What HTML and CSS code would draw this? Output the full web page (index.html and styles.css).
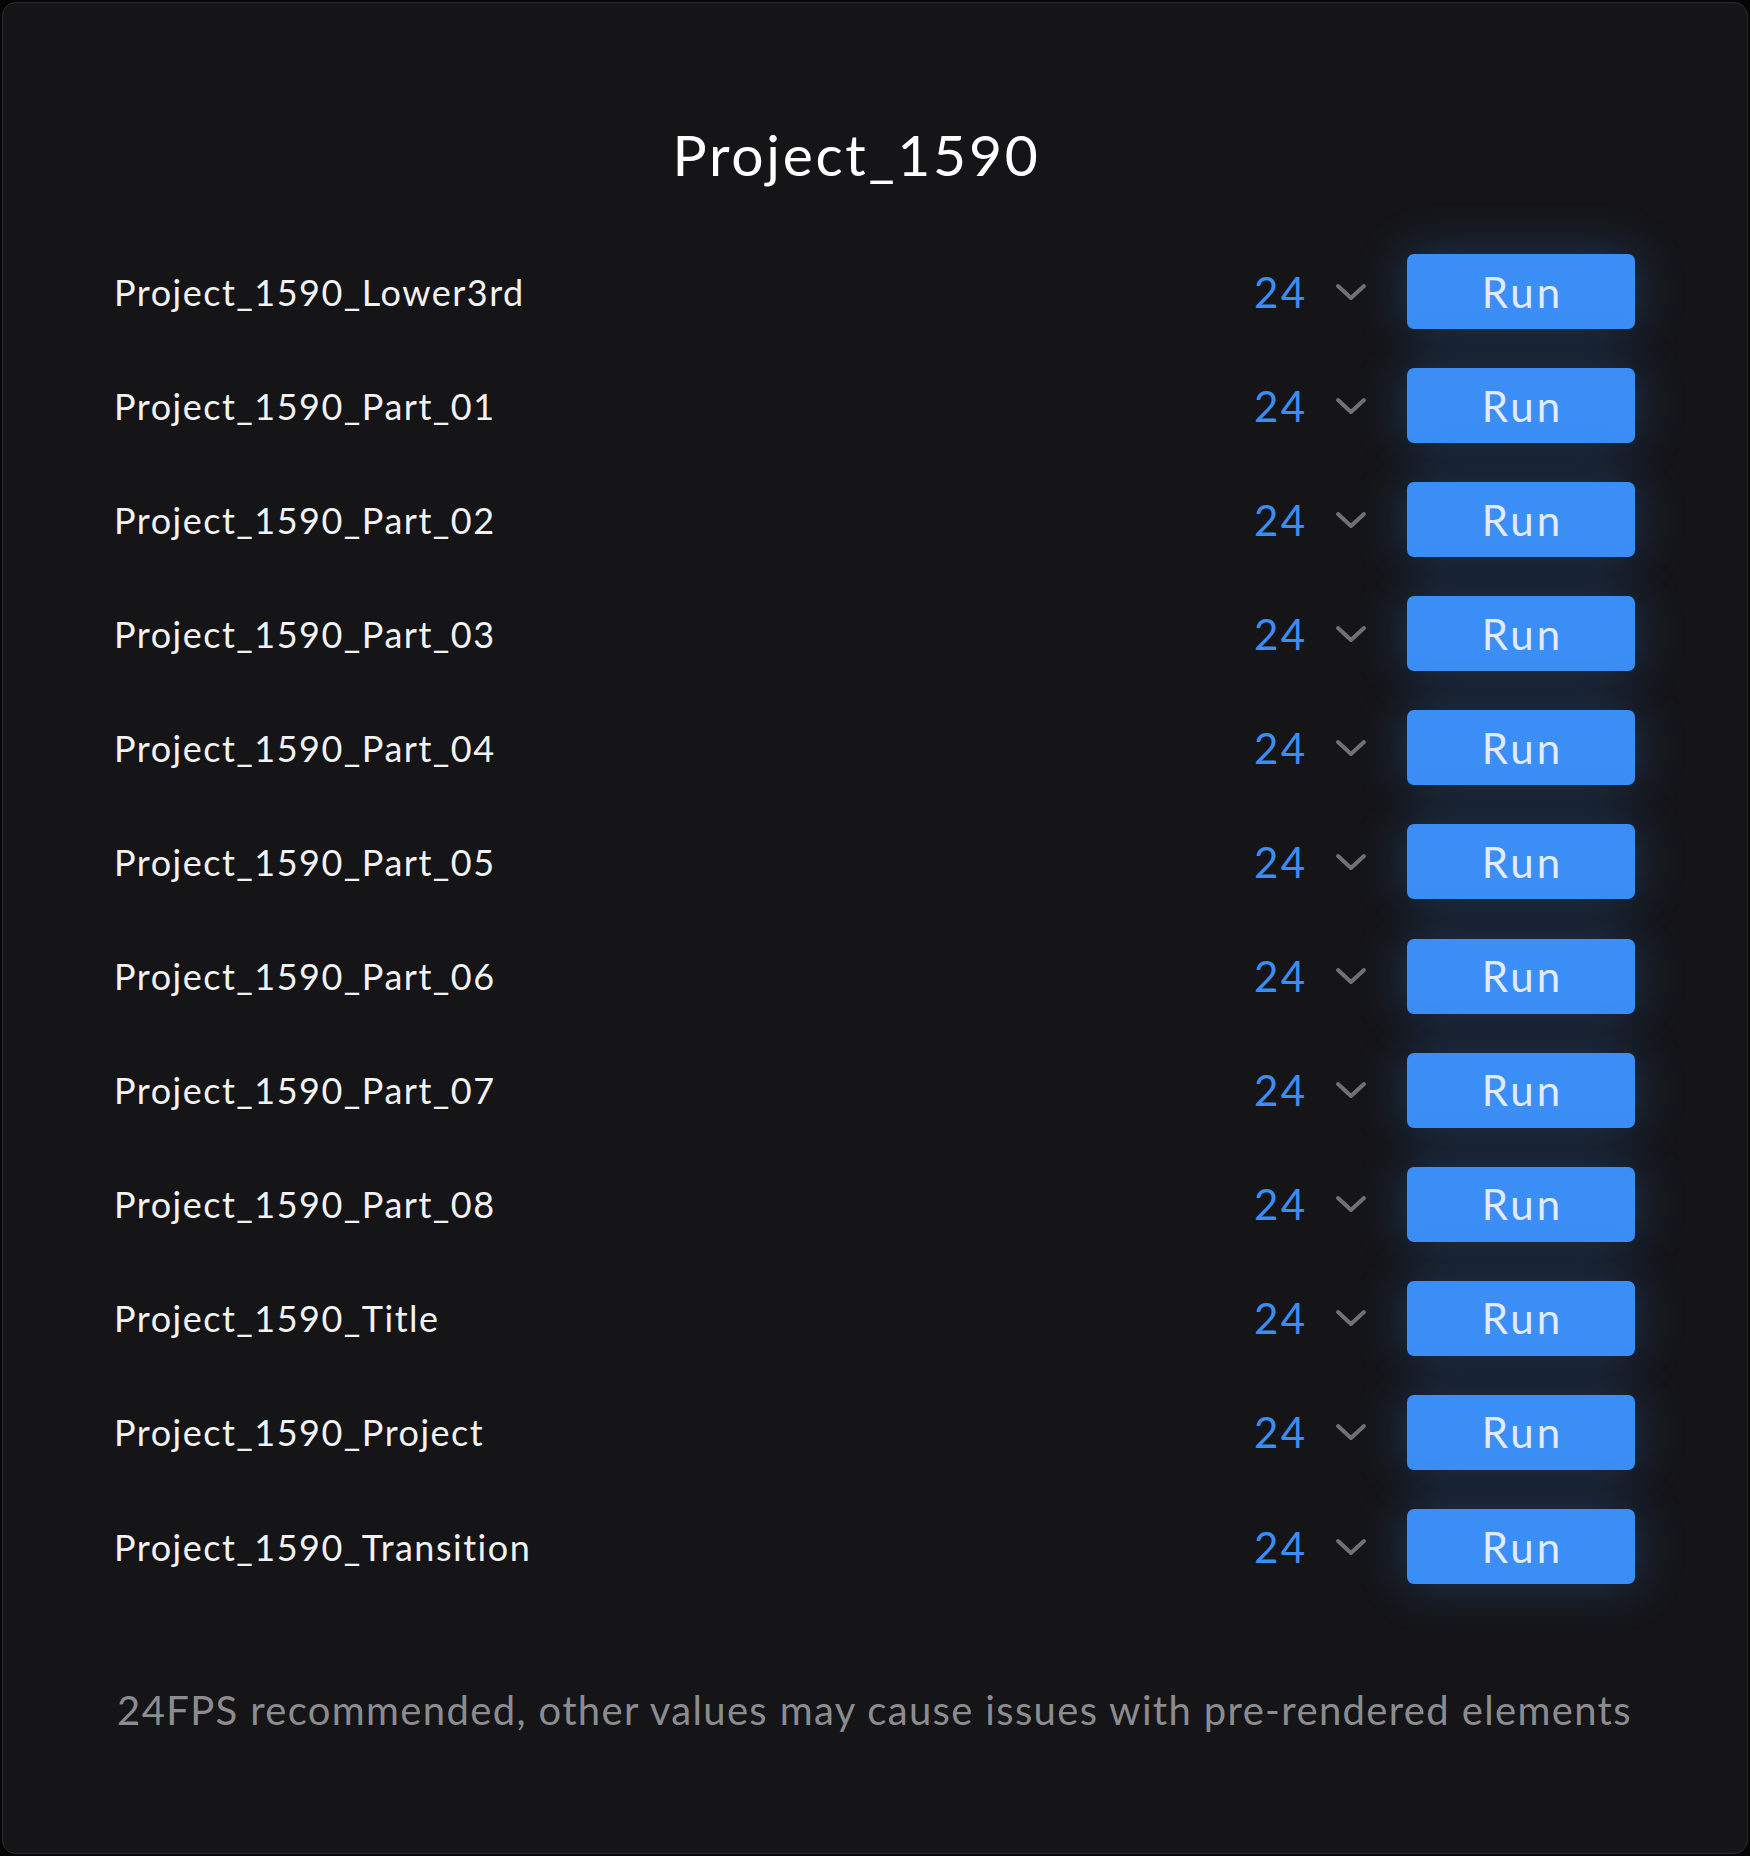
FILE: index.html
```html
<!DOCTYPE html>
<html>
<head>
<meta charset="utf-8">
<link rel="stylesheet" href="styles.css">
</head>
<body>
<div class="panel">
  <h1 class="title">Project_1590</h1>
  <div class="rows">
    <div class="row"><span class="label">Project_1590_Lower3rd</span><span class="fps">24</span><svg class="chev" viewBox="0 0 32 18"><path d="M3 3 L16 15 L29 3"/></svg><button class="run">Run</button></div>
    <div class="row"><span class="label">Project_1590_Part_01</span><span class="fps">24</span><svg class="chev" viewBox="0 0 32 18"><path d="M3 3 L16 15 L29 3"/></svg><button class="run">Run</button></div>
    <div class="row"><span class="label">Project_1590_Part_02</span><span class="fps">24</span><svg class="chev" viewBox="0 0 32 18"><path d="M3 3 L16 15 L29 3"/></svg><button class="run">Run</button></div>
    <div class="row"><span class="label">Project_1590_Part_03</span><span class="fps">24</span><svg class="chev" viewBox="0 0 32 18"><path d="M3 3 L16 15 L29 3"/></svg><button class="run">Run</button></div>
    <div class="row"><span class="label">Project_1590_Part_04</span><span class="fps">24</span><svg class="chev" viewBox="0 0 32 18"><path d="M3 3 L16 15 L29 3"/></svg><button class="run">Run</button></div>
    <div class="row"><span class="label">Project_1590_Part_05</span><span class="fps">24</span><svg class="chev" viewBox="0 0 32 18"><path d="M3 3 L16 15 L29 3"/></svg><button class="run">Run</button></div>
    <div class="row"><span class="label">Project_1590_Part_06</span><span class="fps">24</span><svg class="chev" viewBox="0 0 32 18"><path d="M3 3 L16 15 L29 3"/></svg><button class="run">Run</button></div>
    <div class="row"><span class="label">Project_1590_Part_07</span><span class="fps">24</span><svg class="chev" viewBox="0 0 32 18"><path d="M3 3 L16 15 L29 3"/></svg><button class="run">Run</button></div>
    <div class="row"><span class="label">Project_1590_Part_08</span><span class="fps">24</span><svg class="chev" viewBox="0 0 32 18"><path d="M3 3 L16 15 L29 3"/></svg><button class="run">Run</button></div>
    <div class="row"><span class="label">Project_1590_Title</span><span class="fps">24</span><svg class="chev" viewBox="0 0 32 18"><path d="M3 3 L16 15 L29 3"/></svg><button class="run">Run</button></div>
    <div class="row"><span class="label">Project_1590_Project</span><span class="fps">24</span><svg class="chev" viewBox="0 0 32 18"><path d="M3 3 L16 15 L29 3"/></svg><button class="run">Run</button></div>
    <div class="row"><span class="label">Project_1590_Transition</span><span class="fps">24</span><svg class="chev" viewBox="0 0 32 18"><path d="M3 3 L16 15 L29 3"/></svg><button class="run">Run</button></div>
  </div>
  <p class="note">24FPS recommended, other values may cause issues with pre-rendered elements</p>
</div>
</body>
</html>
```
FILE: styles.css
```css
html, body {
  margin: 0;
  padding: 0;
  background: #050505;
}
body {
  width: 1750px;
  height: 1856px;
  padding: 2px;
  box-sizing: border-box;
  font-family: Lato, "Liberation Sans", sans-serif;
}
.panel {
  height: 100%;
  box-sizing: border-box;
  background: #151518;
  border: 1px solid #2c2c2f;
  border-radius: 14px;
  padding: 117px 112px 0 111px;
  display: flex;
  flex-direction: column;
}
.title {
  margin: 0 36px 0 0;
  text-align: center;
  color: #ffffff;
  font-size: 57px;
  font-weight: 400;
  letter-spacing: 2.7px;
  line-height: 68px;
  height: 68px;
}
.rows {
  margin-top: 66px;
  display: flex;
  flex-direction: column;
  gap: 39.1px;
}
.row {
  display: flex;
  align-items: center;
  height: 75px;
}
.label {
  flex: 1;
  color: #f2f2f2;
  font-size: 36px;
  letter-spacing: 1.5px;
}
.fps {
  color: #3a8ef5;
  font-size: 42px;
  letter-spacing: 2.5px;
  width: 56px;
  margin-left: -4px;
}
.chev {
  width: 32px;
  height: 18px;
  margin-left: 25px;
  margin-right: 40px;
  fill: none;
  stroke: #707075;
  stroke-width: 4;
  stroke-linecap: round;
  stroke-linejoin: round;
}
.run {
  width: 228px;
  height: 75px;
  border: none;
  border-radius: 7px;
  background: #3a8ef5;
  color: #e1ebfc;
  font-family: Lato, "Liberation Sans", sans-serif;
  font-size: 42px;
  letter-spacing: 3px;
  text-indent: 3px;
  padding: 0;
  box-shadow: 0 0 50px rgba(58, 142, 245, 0.3);
}
.note {
  margin: 102px 0 0 0;
  text-align: center;
  color: #8c8c90;
  font-size: 40px;
  letter-spacing: 1.35px;
  line-height: 48px;
}
```
